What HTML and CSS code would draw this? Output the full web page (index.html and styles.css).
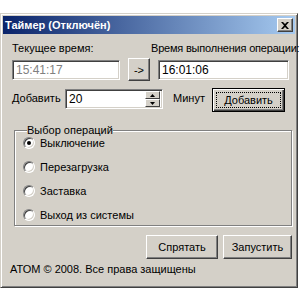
FILE: index.html
```html
<!DOCTYPE html>
<html lang="ru">
<head>
    <meta charset="UTF-8">
    <title>Таймер</title>
    <link rel="stylesheet" href="styles.css">
</head>
<body>
    <div class="window">
        <div class="titlebar">
            <span class="title">Таймер (Отключён)</span>
            <span class="close">
                <svg width="8" height="7" viewBox="0 0 8 7"><path d="M0 0h2l2 2 2-2h2L5 3.5 8 7H6L4 5 2 7H0l3-3.5z" fill="#000"/></svg>
            </span>
        </div>
        <div class="content">
            <div class="times">
                <label class="lbl-now">Текущее время:</label>
                <label class="lbl-run">Время выполнения операции:</label>
                <div class="field disabled">15:41:17</div>
                <button class="btn arrow" type="button">-&gt;</button>
                <div class="field run">16:01:06</div>
            </div>

            <div class="add-row">
                <label class="lbl-add">Добавить</label>
                <div class="field spin">
                    <span>20</span>
                    <span class="spinner">
                        <span class="spin-btn"><svg width="5" height="3" viewBox="0 0 5 3"><path d="M0 3h5L2.5 0z" fill="#000"/></svg></span>
                        <span class="spin-btn"><svg width="5" height="3" viewBox="0 0 5 3"><path d="M0 0h5L2.5 3z" fill="#000"/></svg></span>
                    </span>
                </div>
                <span class="lbl-min">Минут</span>
                <button class="btn default" type="button"><span class="focus">Добавить</span></button>
            </div>

            <fieldset class="group">
                <legend>Выбор операций</legend>
                <div class="radio checked"><span class="dot"></span>Выключение</div>
                <div class="radio"><span class="dot"></span>Перезагрузка</div>
                <div class="radio"><span class="dot"></span>Заставка</div>
                <div class="radio"><span class="dot"></span>Выход из системы</div>
            </fieldset>

            <div class="actions">
                <button class="btn hide" type="button">Спрятать</button>
                <button class="btn start" type="button">Запустить</button>
            </div>

            <div class="footer">АТОМ © 2008. Все права защищены</div>
        </div>
    </div>
</body>
</html>
```

FILE: styles.css
```css
body {
    margin: 0;
    background: #fff;
    font-family: "Liberation Sans", Arial, sans-serif;
    font-size: 11px;
    color: #000;
}
.window {
    margin-top: 13px;
    width: 298px;
    height: 275px;
    box-sizing: border-box;
    background: #d4d0c8;
    border-top: 1px solid #d4d0c8;
    border-left: 1px solid #d4d0c8;
    border-right: 1px solid #404040;
    border-bottom: 1px solid #404040;
    box-shadow: inset 1px 1px 0 #fff, inset -1px -1px 0 #808080;
    padding: 2px;
    display: flex;
    flex-direction: column;
}
.titlebar {
    height: 18px;
    background: linear-gradient(to right, #0a246a, #a6caf0);
    display: flex;
    align-items: center;
    justify-content: space-between;
    padding: 0 2px 0 2px;
}
.title {
    color: #fff;
    font-weight: bold;
    font-size: 11px;
}
.close {
    width: 14px;
    height: 12px;
    background: #d4d0c8;
    border-top: 1px solid #fff;
    border-left: 1px solid #fff;
    border-right: 1px solid #404040;
    border-bottom: 1px solid #404040;
    box-shadow: inset -1px -1px 0 #808080;
    display: flex;
    align-items: center;
    justify-content: center;
}
.content {
    padding: 8px 0 0 9px;
    display: flex;
    flex-direction: column;
}
.times {
    display: grid;
    grid-template-columns: 108px 22px 131px;
    column-gap: 8px;
    row-gap: 4px;
    align-items: center;
}
.lbl-now {
    grid-column: 1 / 3;
}
.lbl-run {
    grid-column: 3;
    margin-left: -7px;
    white-space: nowrap;
    letter-spacing: -0.2px;
}
.field {
    height: 20px;
    box-sizing: border-box;
    background: #fff;
    border-top: 1px solid #808080;
    border-left: 1px solid #808080;
    border-right: 1px solid #fff;
    border-bottom: 1px solid #fff;
    box-shadow: inset 1px 1px 0 #404040, inset -1px -1px 0 #d4d0c8;
    padding: 0 3px;
    display: flex;
    align-items: center;
    font-size: 12px;
}
.field.disabled {
    color: #808080;
}
.btn {
    font-family: inherit;
    font-size: 11px;
    color: #000;
    background: #d4d0c8;
    border-top: 1px solid #fff;
    border-left: 1px solid #fff;
    border-right: 1px solid #404040;
    border-bottom: 1px solid #404040;
    box-shadow: inset -1px -1px 0 #808080;
    padding: 0;
    box-sizing: border-box;
}
.arrow {
    height: 23px;
}
.add-row {
    display: flex;
    align-items: center;
    margin-top: 5px;
}
.lbl-add {
    width: 53px;
    margin-top: -2px;
}
.spin {
    width: 98px;
    justify-content: space-between;
    padding-right: 2px;
}
.spinner {
    display: flex;
    flex-direction: column;
    width: 15px;
    height: 16px;
}
.spin-btn {
    flex: 1;
    background: #d4d0c8;
    border-top: 1px solid #fff;
    border-left: 1px solid #fff;
    border-right: 1px solid #404040;
    border-bottom: 1px solid #404040;
    display: flex;
    align-items: center;
    justify-content: center;
    box-sizing: border-box;
}
.lbl-min {
    margin-left: 10px;
    margin-top: -2px;
    width: 39px;
}
.btn.default {
    width: 73px;
    height: 24px;
    margin-top: 2px;
    border: 1px solid #000;
    box-shadow: inset 1px 1px 0 #fff, inset -1px -1px 0 #404040, inset -2px -2px 0 #808080;
    padding: 3px;
}
.focus {
    display: flex;
    height: 100%;
    align-items: center;
    justify-content: center;
    border: 1px dotted #000;
    box-sizing: border-box;
}
.group {
    margin: 12px 0 0 2px;
    width: 278px;
    height: 102px;
    box-sizing: border-box;
    padding: 0 0 0 8px;
    border: 1px solid #808080;
    box-shadow: 1px 1px 0 #fff, inset 1px 1px 0 #fff;
    display: flex;
    flex-direction: column;
    gap: 7px;
}
.group legend {
    padding: 0;
    margin-left: 4px;
    background: #d4d0c8;
}
.radio {
    display: flex;
    align-items: center;
    height: 17px;
}
.radio.checked {
    margin-top: -2px;
}
.dot {
    width: 12px;
    height: 12px;
    box-sizing: border-box;
    border-radius: 50%;
    background: #fff;
    border: 1px solid;
    border-color: #808080 #fff #fff #808080;
    box-shadow: inset 1px 1px 0 #404040, inset -1px -1px 0 #d4d0c8;
    margin-right: 5px;
    position: relative;
}
.radio.checked .dot::after {
    content: "";
    position: absolute;
    left: 3px;
    top: 3px;
    width: 4px;
    height: 4px;
    border-radius: 50%;
    background: #000;
}
.actions {
    display: flex;
    gap: 5px;
    margin: 9px 0 0 134px;
}
.btn.hide {
    width: 72px;
    height: 24px;
}
.btn.start {
    width: 69px;
    height: 24px;
}
.footer {
    margin: 4px 0 0 -2px;
}
```
